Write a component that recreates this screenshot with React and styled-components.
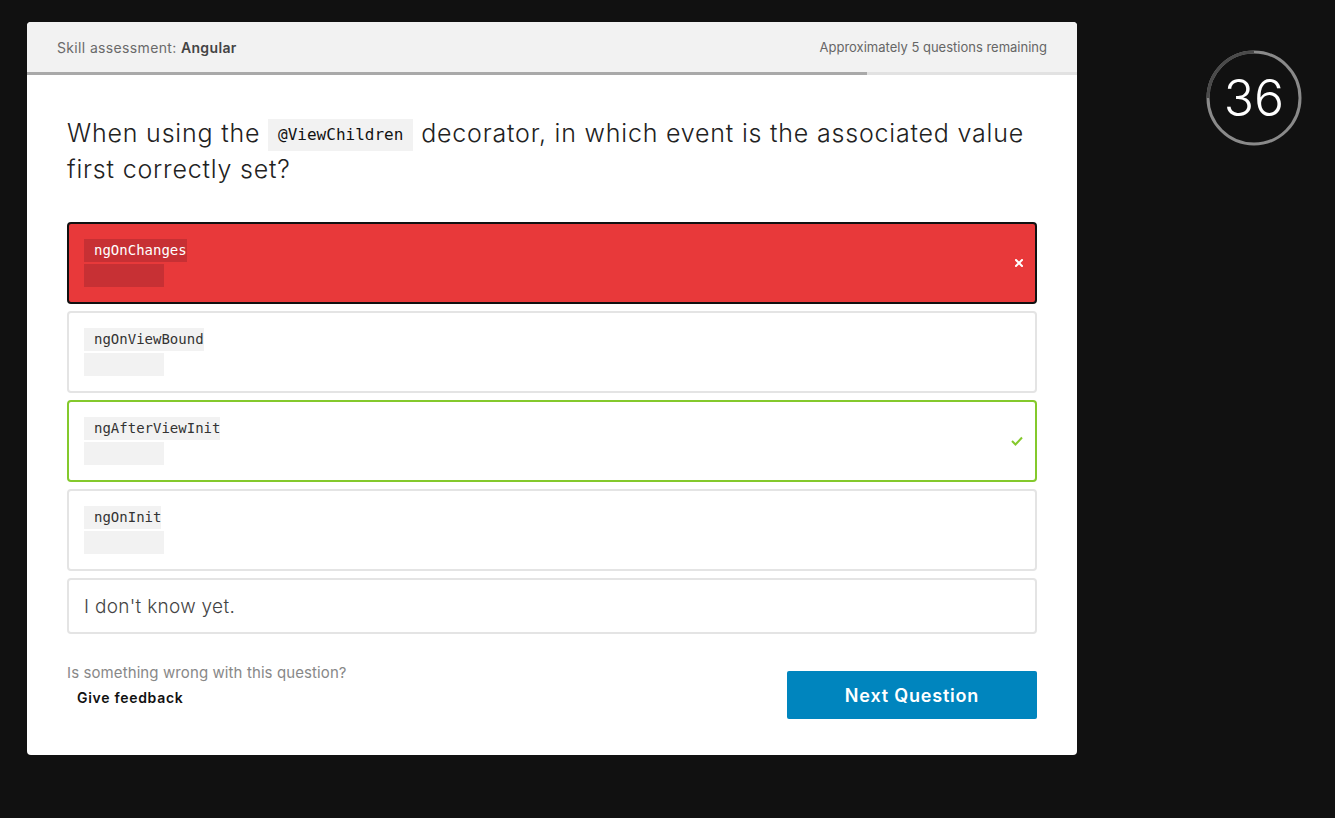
import React from "react";
import styled, { createGlobalStyle } from "styled-components";

const GlobalStyle = createGlobalStyle`
  html, body {
    margin: 0;
    padding: 0;
    background: #111111;
  }
  body {
    font-family: Inter, "Noto Sans", sans-serif;
  }
`;

const options = [
  { code: "ngOnChanges", state: "wrong" },
  { code: "ngOnViewBound" },
  { code: "ngAfterViewInit", state: "right" },
  { code: "ngOnInit" },
];

const CrossIcon = () => (
  <svg width="8" height="8" viewBox="0 0 8 8">
    <path d="M1 1 L7 7 M7 1 L1 7" stroke="#fff" strokeWidth="2" strokeLinecap="square" />
  </svg>
);

const CheckIcon = () => (
  <svg width="12" height="10" viewBox="0 0 12 10">
    <path d="M1 5 L4.5 8.5 L11 1.5" fill="none" stroke="#84c92c" strokeWidth="2" />
  </svg>
);

const App = () => {
  return (
    <>
      <GlobalStyle />
      <Page>
        <Card>
          <Header>
            <Title>
              Skill assessment: <b>Angular</b>
            </Title>
            <Remaining>Approximately 5 questions remaining</Remaining>
          </Header>
          <Progress>
            <ProgressFill style={{ width: "80%" }} />
          </Progress>
          <Body>
            <Question>
              When using the <InlineCode>@ViewChildren</InlineCode> decorator, in which event is the associated value
              first correctly set?
            </Question>
            <Options>
              {options.map((o) => (
                <Option key={o.code} $state={o.state}>
                  <CodeBlock>
                    <CodeLine $state={o.state}>{o.code}</CodeLine>
                    <CodeEmpty $state={o.state} />
                  </CodeBlock>
                  {o.state === "wrong" && (
                    <Mark>
                      <CrossIcon />
                    </Mark>
                  )}
                  {o.state === "right" && (
                    <Mark>
                      <CheckIcon />
                    </Mark>
                  )}
                </Option>
              ))}
              <Option $plain>
                <DontKnow>I don't know yet.</DontKnow>
              </Option>
            </Options>
            <Footer>
              <Feedback>
                <FeedbackQ>Is something wrong with this question?</FeedbackQ>
                <FeedbackLink>Give feedback</FeedbackLink>
              </Feedback>
              <NextButton>Next Question</NextButton>
            </Footer>
          </Body>
        </Card>
        <Timer>
          <svg width="98" height="98" viewBox="0 0 98 98">
            <circle cx="49" cy="49" r="46" fill="none" stroke="#8a8a8a" strokeWidth="3" />
            <path d="M49 3 A46 46 0 0 0 3 49" fill="none" stroke="#4a4a4a" strokeWidth="3" />
          </svg>
          <TimerValue>36</TimerValue>
        </Timer>
      </Page>
    </>
  );
};

export default App;

const Page = styled.div`
  display: flex;
  align-items: flex-start;
  padding: 22px 0 0 27px;
  min-height: 100vh;
  box-sizing: border-box;
`;

const Card = styled.div`
  width: 1050px;
  background: #ffffff;
  border-radius: 4px;
  overflow: hidden;
`;

const Header = styled.div`
  display: flex;
  justify-content: space-between;
  align-items: center;
  height: 50px;
  padding: 0 30px;
  background: #f2f2f2;
`;

const Title = styled.div`
  font-size: 14px;
  letter-spacing: 0.35px;
  color: #6a6a6a;
  b {
    font-weight: 600;
    color: #444;
  }
`;

const Remaining = styled.div`
  font-size: 13px;
  color: #666;
`;

const Progress = styled.div`
  height: 3px;
  background: #e2e2e2;
`;

const ProgressFill = styled.div`
  height: 100%;
  background: #a9a9a9;
`;

const Body = styled.div`
  padding: 40px 40px 36px;
`;

const Question = styled.div`
  font-size: 25px;
  font-weight: 300;
  letter-spacing: 0.8px;
  line-height: 36px;
  color: #222;
  margin-bottom: 35px;
`;

const InlineCode = styled.code`
  display: inline-block;
  font-family: "DejaVu Sans Mono", monospace;
  font-size: 16px;
  letter-spacing: 0;
  line-height: 32px;
  padding: 0 10px;
  background: #f2f2f2;
  color: #111;
  vertical-align: 2px;
`;

const Options = styled.div`
  display: flex;
  flex-direction: column;
  gap: 7px;
`;

const Option = styled.div`
  position: relative;
  display: flex;
  align-items: center;
  box-sizing: border-box;
  min-height: ${(p) => (p.$plain ? "56px" : "82px")};
  padding: 0 15px;
  border-radius: 4px;
  border: 2px solid
    ${(p) => (p.$state === "wrong" ? "#111" : p.$state === "right" ? "#84c92c" : "#e4e4e4")};
  background: ${(p) => (p.$state === "wrong" ? "#e8393a" : "#fff")};
`;

const CodeBlock = styled.div`
  display: flex;
  flex-direction: column;
  align-items: flex-start;
`;

const CodeLine = styled.div`
  font-family: "DejaVu Sans Mono", monospace;
  font-size: 14px;
  line-height: 23px;
  padding: 0 0 0 10px;
  background: ${(p) => (p.$state === "wrong" ? "#c73034" : "#f2f2f2")};
  color: ${(p) => (p.$state === "wrong" ? "#fff" : "#333")};
`;

const CodeEmpty = styled.div`
  width: 80px;
  height: 23px;
  margin-top: 2px;
  background: ${(p) => (p.$state === "wrong" ? "#c73034" : "#f2f2f2")};
`;

const Mark = styled.span`
  position: absolute;
  right: 12px;
  top: 50%;
  transform: translateY(-50%);
  display: flex;
`;

const DontKnow = styled.div`
  font-size: 19px;
  font-weight: 300;
  letter-spacing: 0.3px;
  color: #444;
`;

const Footer = styled.div`
  display: flex;
  justify-content: space-between;
  align-items: flex-start;
  margin-top: 30px;
`;

const Feedback = styled.div`
  display: flex;
  flex-direction: column;
  gap: 8px;
`;

const FeedbackQ = styled.div`
  font-size: 15px;
  letter-spacing: 0.1px;
  line-height: 17px;
  color: #888;
`;

const FeedbackLink = styled.div`
  font-size: 14px;
  font-weight: 600;
  letter-spacing: 0.7px;
  line-height: 17px;
  color: #111;
  padding-left: 10px;
`;

const NextButton = styled.button`
  width: 250px;
  height: 48px;
  margin-top: 7px;
  border: none;
  border-radius: 2px;
  background: #0085be;
  color: #fff;
  font-family: Inter, sans-serif;
  font-size: 18px;
  font-weight: 600;
  letter-spacing: 0.8px;
  cursor: pointer;
`;

const Timer = styled.div`
  position: relative;
  width: 98px;
  height: 98px;
  margin: 27px 0 0 128px;
`;

const TimerValue = styled.div`
  position: absolute;
  inset: 0;
  display: flex;
  align-items: center;
  justify-content: center;
  color: #fff;
  font-size: 50px;
  font-weight: 300;
`;
